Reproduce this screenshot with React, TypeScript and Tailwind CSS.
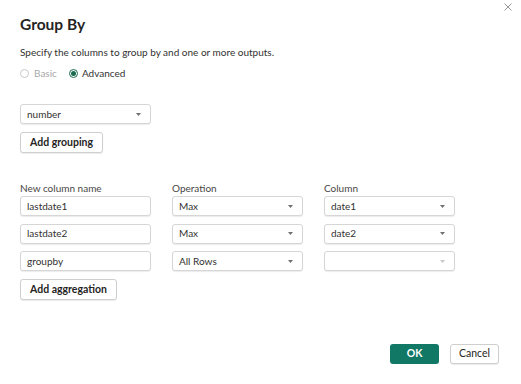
const Chevron = ({ light }: { light?: boolean }) => (
  <svg width="5" height="3" viewBox="0 0 5 3" className="shrink-0">
    <path d="M0 0h5L2.5 3z" fill={light ? "#c8c8c8" : "#707070"} />
  </svg>
);

const Select = ({ value, light }: { value: string; light?: boolean }) => (
  <div className="flex h-[20px] w-[131px] items-center justify-between rounded-[3px] border border-[#d6d6d6] bg-white pl-[6px] pr-[9px] text-[10px] text-[#323130] shadow-[0_1px_1px_rgba(0,0,0,0.08)]">
    <span>{value}</span>
    <Chevron light={light} />
  </div>
);

const Input = ({ value }: { value: string }) => (
  <div className="flex h-[20px] w-[131px] items-center rounded-[3px] border border-[#d6d6d6] bg-white pl-[6px] text-[10px] text-[#323130] shadow-[0_1px_1px_rgba(0,0,0,0.08)]">
    {value}
  </div>
);

const Button = ({ label }: { label: string }) => (
  <button className="h-[21px] rounded-[3px] border border-[#cfcfcf] bg-white px-[9px] text-[10.5px] font-bold text-[#252423] shadow-[0_1px_1px_rgba(0,0,0,0.08)]">
    {label}
  </button>
);

const rows = [
  { name: "lastdate1", op: "Max", col: "date1" },
  { name: "lastdate2", op: "Max", col: "date2" },
  { name: "groupby", op: "All Rows", col: "" },
];

export default function App() {
  return (
    <div
      className="relative flex h-[384px] w-[521px] flex-col bg-white pl-[20px] text-[#252423]"
      style={{ fontFamily: 'Lato, "Open Sans", sans-serif' }}
    >
      <button className="absolute right-[9px] top-[3px] text-[#8a8a8a]">
        <svg width="8" height="8" viewBox="0 0 8 8">
          <path d="M0.5 0.5l7 7M7.5 0.5l-7 7" stroke="currentColor" strokeWidth="0.9" />
        </svg>
      </button>

      <h1 className="mt-[15px] text-[15.5px] font-bold leading-[18px] text-[#252423]">Group By</h1>
      <p className="mt-[12px] text-[10px] leading-[14px] text-[#323130]">
        Specify the columns to group by and one or more outputs.
      </p>

      <div className="mt-[7px] flex items-center text-[10px] leading-[14px]">
        <span className="h-[9px] w-[9px] rounded-full border border-[#c8c8c8]" />
        <span className="ml-[5px] text-[#a8a8a8]">Basic</span>
        <span className="ml-[12px] flex h-[9px] w-[9px] items-center justify-center rounded-full border border-[#1c6b4f]">
          <span className="h-[5px] w-[5px] rounded-full bg-[#1c6b4f]" />
        </span>
        <span className="ml-[4px] text-[#323130]">Advanced</span>
      </div>

      <div className="mt-[24px] flex">
        <Select value="number" />
      </div>
      <div className="mt-[8px] flex">
        <Button label="Add grouping" />
      </div>

      <div className="mt-[29px] grid w-[435px] grid-cols-[131px_131px_131px] gap-x-[21px] text-[10px] leading-[12px] text-[#484644]">
        <span>New column name</span>
        <span>Operation</span>
        <span>Column</span>
      </div>

      <div className="mt-[2px] grid w-[435px] grid-cols-[131px_131px_131px] gap-x-[21px] gap-y-[7.5px]">
        {rows.map((r) => (
          <div key={r.name} className="contents">
            <Input value={r.name} />
            <Select value={r.op} />
            <Select value={r.col} light={!r.col} />
          </div>
        ))}
      </div>

      <div className="mt-[8px] flex">
        <Button label="Add aggregation" />
      </div>

      <div className="mt-auto mb-[20px] mr-[22px] flex justify-end gap-[11px]">
        <button className="h-[20px] w-[49px] rounded-[3px] bg-[#117865] text-[10.5px] font-bold text-white">
          OK
        </button>
        <button className="h-[20px] w-[49px] rounded-[3px] border border-[#cfcfcf] bg-white text-[10.5px] text-[#252423] shadow-[0_1px_1px_rgba(0,0,0,0.08)]">
          Cancel
        </button>
      </div>
    </div>
  );
}
